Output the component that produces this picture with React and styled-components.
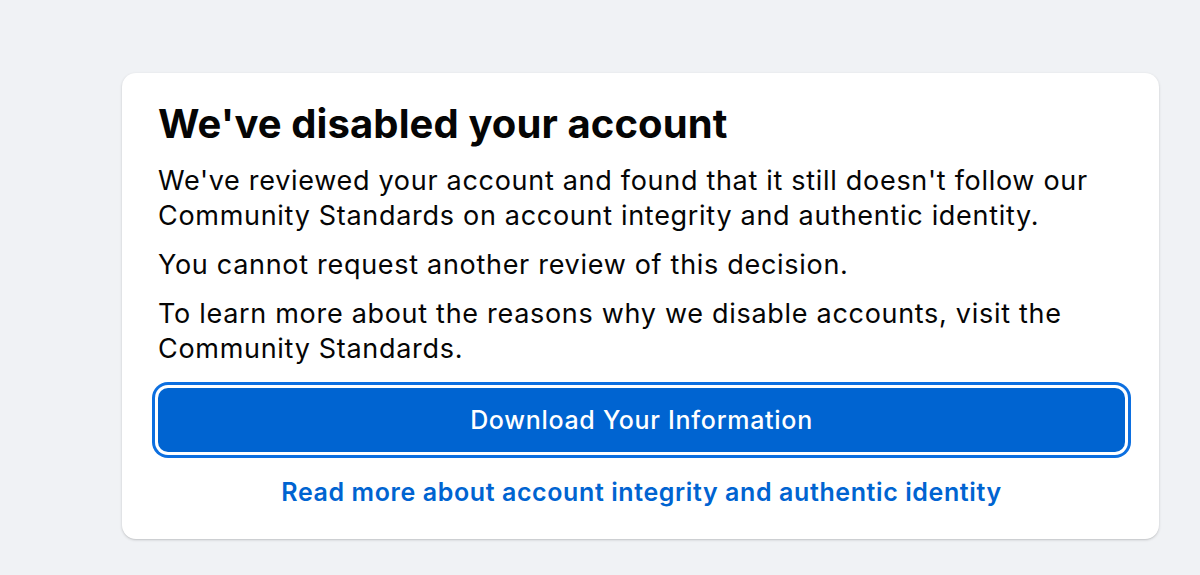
import styled, { createGlobalStyle } from 'styled-components';

const GlobalStyle = createGlobalStyle`
  html, body {
    margin: 0;
    padding: 0;
    background: #f0f2f5;
    font-family: Inter, "Liberation Sans", Arial, sans-serif;
    -webkit-font-smoothing: antialiased;
  }
`;

const Page = styled.div`
  width: 1200px;
  height: 575px;
  padding: 73px 0 0 122px;
  box-sizing: border-box;
  overflow: hidden;
`;

const Card = styled.div`
  width: 1037px;
  box-sizing: border-box;
  background: #ffffff;
  border-radius: 14px;
  box-shadow: 0 1px 3px rgba(0, 0, 0, 0.16), 0 1px 1px rgba(0, 0, 0, 0.05);
  padding: 27px 34px 32px 36px;
`;

const Title = styled.h1`
  margin: 0 0 15px;
  font-size: 40px;
  line-height: 48px;
  font-weight: 700;
  color: #050505;
  letter-spacing: 0.1px;
`;

const Text = styled.p`
  margin: 0 0 14px;
  font-size: 27px;
  line-height: 35px;
  color: #050505;
  letter-spacing: 0.7px;

  &:last-of-type {
    margin-bottom: 0;
  }
`;

const Button = styled.button`
  display: block;
  width: 100%;
  height: 64px;
  margin-top: 22px;
  border: none;
  border-radius: 10px;
  background: #0064d1;
  color: #ffffff;
  font-family: inherit;
  font-size: 25px;
  font-weight: 500;
  letter-spacing: 0.7px;
  cursor: pointer;
  box-shadow: 0 0 0 3px #ffffff, 0 0 0 6px #0c6fe0;
`;

const LinkText = styled.a`
  display: block;
  margin-top: 25px;
  text-align: center;
  font-size: 25px;
  line-height: 30px;
  font-weight: 600;
  letter-spacing: 0.6px;
  color: #0064d1;
  text-decoration: none;
`;

export default function App() {
  return (
    <Page>
      <GlobalStyle />
      <Card>
        <Title>We've disabled your account</Title>
        <Text>
          We've reviewed your account and found that it still doesn't follow our
          <br />
          Community Standards on account integrity and authentic identity.
        </Text>
        <Text>You cannot request another review of this decision.</Text>
        <Text>
          To learn more about the reasons why we disable accounts, visit the
          <br />
          Community Standards.
        </Text>
        <Button>Download Your Information</Button>
        <LinkText href="#">Read more about account integrity and authentic identity</LinkText>
      </Card>
    </Page>
  );
}
